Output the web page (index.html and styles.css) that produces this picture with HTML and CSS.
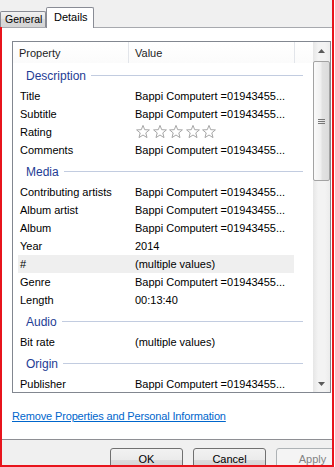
FILE: index.html
```html
<!DOCTYPE html>
<html>
<head>
<meta charset="utf-8">
<link rel="stylesheet" href="styles.css">
</head>
<body>
<div class="window">
  <div class="tabs">
    <div class="tab">General</div>
    <div class="tab active">Details</div>
  </div>
  <div class="frame">
    <div class="page">
      <div class="listbox">
        <div class="list">
          <div class="header">
            <div class="hcell prop">Property</div>
            <div class="hcell val">Value</div>
            <div class="hcell rest"></div>
          </div>
          <div class="section"><span class="stitle">Description</span><span class="sline"></span></div>
          <div class="row"><span class="k">Title</span><span class="v">Bappi Computert =01943455...</span></div>
          <div class="row"><span class="k">Subtitle</span><span class="v">Bappi Computert =01943455...</span></div>
          <div class="row"><span class="k">Rating</span><span class="v stars">
            <svg class="star" viewBox="0 0 14 13.5"><polygon points="7,0.4 8.7,4.7 13.4,4.9 9.8,7.9 11,12.6 7,10 3,12.6 4.2,7.9 0.6,4.9 5.3,4.7"/></svg>
            <svg class="star" viewBox="0 0 14 13.5"><polygon points="7,0.4 8.7,4.7 13.4,4.9 9.8,7.9 11,12.6 7,10 3,12.6 4.2,7.9 0.6,4.9 5.3,4.7"/></svg>
            <svg class="star" viewBox="0 0 14 13.5"><polygon points="7,0.4 8.7,4.7 13.4,4.9 9.8,7.9 11,12.6 7,10 3,12.6 4.2,7.9 0.6,4.9 5.3,4.7"/></svg>
            <svg class="star" viewBox="0 0 14 13.5"><polygon points="7,0.4 8.7,4.7 13.4,4.9 9.8,7.9 11,12.6 7,10 3,12.6 4.2,7.9 0.6,4.9 5.3,4.7"/></svg>
            <svg class="star" viewBox="0 0 14 13.5"><polygon points="7,0.4 8.7,4.7 13.4,4.9 9.8,7.9 11,12.6 7,10 3,12.6 4.2,7.9 0.6,4.9 5.3,4.7"/></svg>
          </span></div>
          <div class="row"><span class="k">Comments</span><span class="v">Bappi Computert =01943455...</span></div>
          <div class="section"><span class="stitle">Media</span><span class="sline"></span></div>
          <div class="row"><span class="k">Contributing artists</span><span class="v">Bappi Computert =01943455...</span></div>
          <div class="row"><span class="k">Album artist</span><span class="v">Bappi Computert =01943455...</span></div>
          <div class="row"><span class="k">Album</span><span class="v">Bappi Computert =01943455...</span></div>
          <div class="row"><span class="k">Year</span><span class="v">2014</span></div>
          <div class="row hover"><span class="k">#</span><span class="v">(multiple values)</span></div>
          <div class="row"><span class="k">Genre</span><span class="v">Bappi Computert =01943455...</span></div>
          <div class="row"><span class="k">Length</span><span class="v">00:13:40</span></div>
          <div class="section"><span class="stitle">Audio</span><span class="sline"></span></div>
          <div class="row"><span class="k">Bit rate</span><span class="v">(multiple values)</span></div>
          <div class="section"><span class="stitle">Origin</span><span class="sline"></span></div>
          <div class="row"><span class="k">Publisher</span><span class="v">Bappi Computert =01943455...</span></div>
        </div>
        <div class="scrollbar">
          <div class="sbbtn"><svg width="7" height="4" viewBox="0 0 7 4"><polygon points="3.5,0 7,4 0,4"/></svg></div>
          <div class="thumb"><span class="grip"></span><span class="grip"></span><span class="grip"></span></div>
          <div class="track"></div>
          <div class="sbbtn down"><svg width="7" height="4" viewBox="0 0 7 4"><polygon points="0,0 7,0 3.5,4"/></svg></div>
        </div>
      </div>
      <a class="link" href="#">Remove Properties and Personal Information</a>
    </div>
    <div class="buttons">
      <div class="btn">OK</div>
      <div class="btn">Cancel</div>
      <div class="btn disabled">Apply</div>
    </div>
  </div>
</div>
</body>
</html>
```

FILE: styles.css
```css
* { box-sizing: border-box; }
html, body { margin: 0; padding: 0; }
body {
  width: 335px;
  height: 467px;
  overflow: hidden;
  background: #ffffff;
  font-family: "Liberation Sans", Arial, sans-serif;
  font-size: 11px;
  color: #000;
}
.window {
  width: 334px;
  height: 467px;
  background: #f0f0f0;
  border-right: 2px solid #e8141c;
  display: flex;
  flex-direction: column;
}
.tabs {
  height: 27px;
  display: flex;
  align-items: flex-end;
}
.tab {
  height: 16px;
  width: 46px;
  padding: 0 0 0 4px;
  border: 1px solid #898c95;
  border-bottom: none;
  border-radius: 2px 2px 0 0;
  background: linear-gradient(#f2f2f2, #e3e3e3 50%, #d9d9d9 50%, #d5d5d5);
  font-size: 10.5px;
  line-height: 15px;
  white-space: nowrap;
  color: #000;
}
.tab.active {
  position: relative;
  z-index: 1;
  height: 21px;
  width: 48px;
  margin-bottom: -1px;
  background: #ffffff;
  padding-left: 7px;
  font-size: 11px;
  line-height: 18px;
}
.frame {
  flex: 1;
  display: flex;
  flex-direction: column;
  border-left: 2px solid #e8141c;
  border-bottom: 2px solid #e8141c;
  min-height: 0;
}
.page {
  height: 413px;
  background: #ffffff;
  border-top: 1px solid #a7a9ae;
  border-bottom: 1px solid #8e8f94;
  padding: 13px 0 0 10px;
}
.listbox {
  width: 319px;
  height: 352px;
  border: 1px solid #828790;
  display: flex;
  overflow: hidden;
}
.list {
  flex: 1;
  overflow: hidden;
}
.header {
  height: 21px;
  display: flex;
  background: linear-gradient(#ffffff, #fbfbfb);
}
.hcell {
  height: 21px;
  padding-top: 2px;
  line-height: 19px;
  color: #1e1e1e;
  border-right: 1px solid #e2e5ea;
}
.hcell.prop { width: 116px; padding-left: 6px; }
.hcell.val { width: 166px; padding-left: 6px; }
.hcell.rest { flex: 1; border-right: none; }
.section {
  height: 24px;
  display: flex;
  align-items: center;
  padding-top: 1px;
  margin: 0 10px 0 5px;
  padding-left: 8px;
}
.stitle {
  font-size: 12px;
  color: #1e3c94;
}
.sline {
  flex: 1;
  height: 1px;
  background: #c2cce0;
  margin-left: 5px;
}
.row {
  height: 18px;
  line-height: 18px;
  margin: 0 19px 0 5px;
  display: flex;
  white-space: nowrap;
}
.row.hover { background: #efefef; }
.k { width: 117px; padding-left: 2px; }
.v { flex: 1; }
.stars { display: flex; align-items: center; gap: 2.6px; padding-left: 1px; }
.star { width: 14px; height: 13.5px; }
.star polygon { fill: #ffffff; stroke: #a6a6a6; stroke-width: 1; stroke-linejoin: round; }
.scrollbar {
  width: 17px;
  display: flex;
  flex-direction: column;
  background: linear-gradient(90deg, #e6e6e6, #f3f3f3 30%, #f3f3f3 70%, #ececec);
}
.sbbtn {
  height: 17px;
  display: flex;
  align-items: center;
  justify-content: center;
}
.sbbtn svg polygon { fill: #5b5b5b; }
.sbbtn.down { height: 16px; }
.thumb {
  margin: 2px 0 0 0;
  height: 120px;
  border: 1px solid #a3a3a3;
  border-radius: 2px;
  background: linear-gradient(90deg, #fafafa, #f0f0f0 45%, #e2e2e2 55%, #dcdcdc);
  display: flex;
  flex-direction: column;
  align-items: center;
  justify-content: center;
  gap: 1px;
}
.grip {
  width: 7px;
  height: 1px;
  background: #777;
}
.track { flex: 1; }
.link {
  display: inline-block;
  margin-top: 16px;
  margin-left: 0;
  color: #0066cc;
  text-decoration: underline;
  line-height: 15px;
  letter-spacing: -0.15px;
}
.buttons {
  flex: 1;
  display: flex;
  gap: 10px;
  padding: 8px 0 0 108px;
  overflow: hidden;
}
.btn {
  flex: none;
  width: 73px;
  height: 23px;
  border: 1px solid #707070;
  border-radius: 3px;
  background: linear-gradient(#f2f2f2, #ebebeb 50%, #dddddd 50%, #cfcfcf);
  text-align: center;
  line-height: 21px;
  color: #000;
}
.btn.disabled {
  border-color: #adb2b5;
  background: #f4f4f4;
  color: #838383;
}
```
